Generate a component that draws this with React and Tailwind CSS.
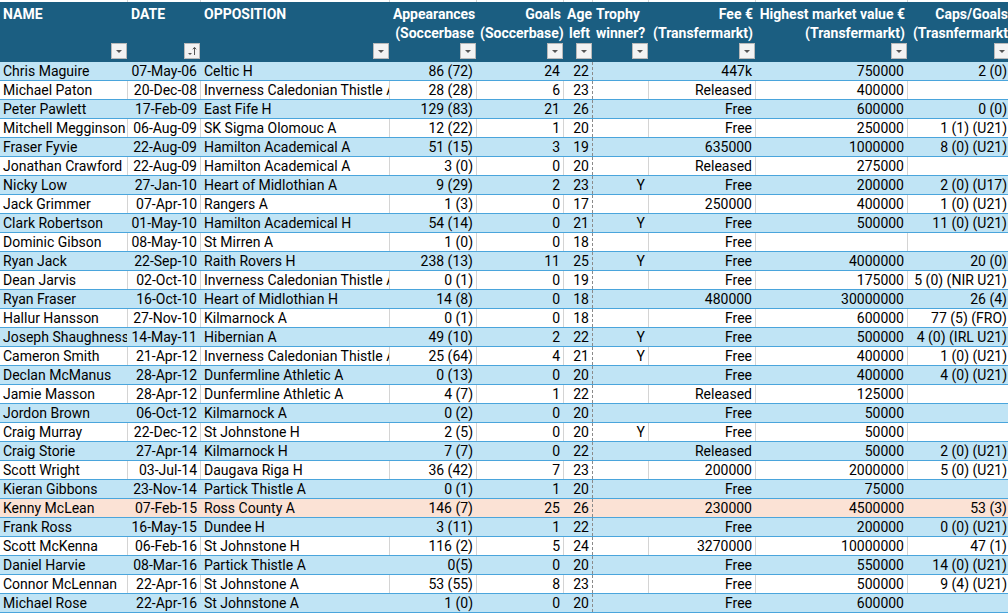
import React from 'react';

// column widths (px) and alignment, left to right
const COLS = [
  { w: 'w-[128px]', align: 'text-left', head: 'text-left' },
  { w: 'w-[73px]', align: 'text-right', head: 'text-left' },
  { w: 'w-[189px]', align: 'text-left', head: 'text-left' },
  { w: 'w-[87px]', align: 'text-right', head: 'text-right' },
  { w: 'w-[87px]', align: 'text-right', head: 'text-right' },
  { w: 'w-[29px]', align: 'text-right', head: 'text-right' },
  { w: 'w-[56px]', align: 'text-right', head: 'text-left' },
  { w: 'w-[107px]', align: 'text-right', head: 'text-right' },
  { w: 'w-[152px]', align: 'text-right', head: 'text-right' },
  { w: 'w-[103px]', align: 'text-right', head: 'text-right' },
];

const HEADERS = [
  ['NAME', ''],
  ['DATE', ''],
  ['OPPOSITION', ''],
  ['Appearances', '(Soccerbase'],
  ['Goals', '(Soccerbase)'],
  ['Age', 'left'],
  ['Trophy', 'winner?'],
  ['Fee €', '(Transfermarkt)'],
  ['Highest market value €', '(Transfermarkt)'],
  ['Caps/Goals', '(Trasnfermarkt'],
];

const ROWS = [
  ['Chris Maguire', '07-May-06', 'Celtic H', '86 (72)', '24', '22', '', '447k', '750000', '2 (0)'],
  ['Michael Paton', '20-Dec-08', 'Inverness Caledonian Thistle A', '28 (28)', '6', '23', '', 'Released', '400000', ''],
  ['Peter Pawlett', '17-Feb-09', 'East Fife H', '129 (83)', '21', '26', '', 'Free', '600000', '0 (0)'],
  ['Mitchell Megginson', '06-Aug-09', 'SK Sigma Olomouc A', '12 (22)', '1', '20', '', 'Free', '250000', '1 (1) (U21)'],
  ['Fraser Fyvie', '22-Aug-09', 'Hamilton Academical A', '51 (15)', '3', '19', '', '635000', '1000000', '8 (0) (U21)'],
  ['Jonathan Crawford', '22-Aug-09', 'Hamilton Academical A', '3 (0)', '0', '20', '', 'Released', '275000', ''],
  ['Nicky Low', '27-Jan-10', 'Heart of Midlothian A', '9 (29)', '2', '23', 'Y', 'Free', '200000', '2 (0) (U17)'],
  ['Jack Grimmer', '07-Apr-10', 'Rangers A', '1 (3)', '0', '17', '', '250000', '400000', '1 (0) (U21)'],
  ['Clark Robertson', '01-May-10', 'Hamilton Academical H', '54 (14)', '0', '21', 'Y', 'Free', '500000', '11 (0) (U21)'],
  ['Dominic Gibson', '08-May-10', 'St Mirren A', '1 (0)', '0', '18', '', 'Free', '', ''],
  ['Ryan Jack', '22-Sep-10', 'Raith Rovers H', '238 (13)', '11', '25', 'Y', 'Free', '4000000', '20 (0)'],
  ['Dean Jarvis', '02-Oct-10', 'Inverness Caledonian Thistle A', '0 (1)', '0', '19', '', 'Free', '175000', '5 (0) (NIR U21)'],
  ['Ryan Fraser', '16-Oct-10', 'Heart of Midlothian H', '14 (8)', '0', '18', '', '480000', '30000000', '26 (4)'],
  ['Hallur Hansson', '27-Nov-10', 'Kilmarnock A', '0 (1)', '0', '18', '', 'Free', '600000', '77 (5) (FRO)'],
  ['Joseph Shaughnessy', '14-May-11', 'Hibernian A', '49 (10)', '2', '22', 'Y', 'Free', '500000', '4 (0) (IRL U21)'],
  ['Cameron Smith', '21-Apr-12', 'Inverness Caledonian Thistle A', '25 (64)', '4', '21', 'Y', 'Free', '400000', '1 (0) (U21)'],
  ['Declan McManus', '28-Apr-12', 'Dunfermline Athletic A', '0 (13)', '0', '20', '', 'Free', '400000', '4 (0) (U21)'],
  ['Jamie Masson', '28-Apr-12', 'Dunfermline Athletic A', '4 (7)', '1', '22', '', 'Released', '125000', ''],
  ['Jordon Brown', '06-Oct-12', 'Kilmarnock A', '0 (2)', '0', '20', '', 'Free', '50000', ''],
  ['Craig Murray', '22-Dec-12', 'St Johnstone H', '2 (5)', '0', '20', 'Y', 'Free', '50000', ''],
  ['Craig Storie', '27-Apr-14', 'Kilmarnock H', '7 (7)', '0', '22', '', 'Released', '50000', '2 (0) (U21)'],
  ['Scott Wright', '03-Jul-14', 'Daugava Riga H', '36 (42)', '7', '23', '', '200000', '2000000', '5 (0) (U21)'],
  ['Kieran Gibbons', '23-Nov-14', 'Partick Thistle A', '0 (1)', '1', '20', '', 'Free', '75000', ''],
  ['Kenny McLean', '07-Feb-15', 'Ross County A', '146 (7)', '25', '26', '', '230000', '4500000', '53 (3)'],
  ['Frank Ross', '16-May-15', 'Dundee H', '3 (11)', '1', '22', '', 'Free', '200000', '0 (0) (U21)'],
  ['Scott McKenna', '06-Feb-16', 'St Johnstone H', '116 (2)', '5', '24', '', '3270000', '10000000', '47 (1)'],
  ['Daniel Harvie', '08-Mar-16', 'Partick Thistle A', '0(5)', '0', '20', '', 'Free', '550000', '14 (0) (U21)'],
  ['Connor McLennan', '22-Apr-16', 'St Johnstone A', '53 (55)', '8', '23', '', 'Free', '500000', '9 (4) (U21)'],
  ['Michael Rose', '22-Apr-16', 'St Johnstone A', '1 (0)', '0', '20', '', 'Free', '600000', ''],
];

const FilterButton = ({ sorted }) => (
  <div className="w-4 h-4 bg-[#f3f3f3] border border-[#b9b9b9] flex items-center justify-center self-end mr-px mb-[3px]">
    {sorted ? (
      <svg width="12" height="12" viewBox="0 0 12 12">
        <path d="M2 8 L6 8 L4 10 Z" fill="#555" />
        <path d="M8.5 10 L8.5 2.5" stroke="#555" strokeWidth="1" />
        <path d="M6.8 4.3 L8.5 2.3 L10.2 4.3" stroke="#555" strokeWidth="1" fill="none" />
      </svg>
    ) : (
      <svg width="10" height="10" viewBox="0 0 10 10">
        <path d="M2 4 L8 4 L5 7 Z" fill="#555" />
      </svg>
    )}
  </div>
);

const rowBg = (i) => {
  if (i === 23) return 'bg-[#fbe2d5]';
  return i % 2 === 0 ? 'bg-[#c0e4f5]' : 'bg-white';
};

export default function App() {
  return (
    <div
      className="w-[1008px] h-[614px] overflow-hidden bg-white text-[14px] text-black"
      style={{ fontFamily: 'Roboto, "Liberation Sans", sans-serif' }}
    >
      {/* gridline strip above the header */}
      <div className="flex h-[2px] bg-white">
        {COLS.map((c, j) => (
          <div key={j} className={`${c.w} shrink-0 border-r border-[#d4d4d4]`} />
        ))}
      </div>

      {/* header */}
      <div className="flex h-[60px] bg-[#1b5e81] text-white font-bold leading-[19px]">
        {HEADERS.map((h, j) => (
          <div
            key={j}
            className={`${COLS[j].w} shrink-0 flex flex-col justify-between overflow-hidden ${COLS[j].head}`}
          >
            <div className="pt-[3px] px-[3px] whitespace-nowrap overflow-hidden">
              <div>{h[0]}</div>
              <div>{h[1] || '\u00a0'}</div>
            </div>
            <FilterButton sorted={j === 1} />
          </div>
        ))}
      </div>

      {/* rows */}
      {ROWS.map((r, i) => {
        const white = i % 2 === 1 && i !== 23;
        return (
          <div key={i} className={`flex h-[19px] border-b border-[#4aa5dc] ${rowBg(i)}`}>
            {r.map((v, j) => (
              <div
                key={j}
                className={`${COLS[j].w} shrink-0 overflow-hidden whitespace-nowrap leading-[18px] px-[3px] ${COLS[j].align} ${
                  j === 5
                    ? 'border-r border-dashed border-[#8a8a8a]'
                    : white
                    ? 'border-r border-[#d4d4d4]'
                    : 'border-r border-transparent'
                }`}
              >
                {v}
              </div>
            ))}
          </div>
        );
      })}
    </div>
  );
}
